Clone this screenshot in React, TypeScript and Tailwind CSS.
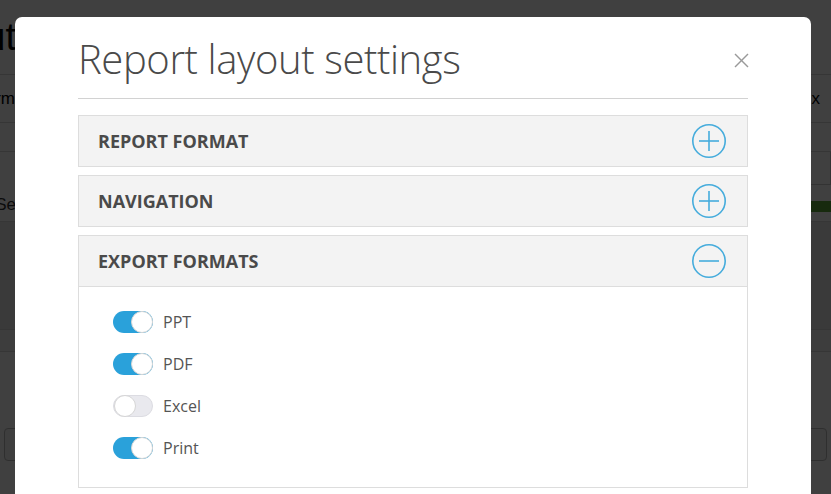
import React from "react";

function CircleIcon({ minus }: { minus?: boolean }) {
  return (
    <svg width="36" height="36" viewBox="0 0 36 36" fill="none">
      <circle cx="18" cy="18" r="16.2" stroke="#45acdc" strokeWidth="1.6" />
      <line x1="8" y1="18" x2="28" y2="18" stroke="#45acdc" strokeWidth="1.6" />
      {!minus && <line x1="18" y1="8" x2="18" y2="28" stroke="#45acdc" strokeWidth="1.6" />}
    </svg>
  );
}

function Toggle({ on }: { on: boolean }) {
  return (
    <div
      className={
        on
          ? "flex h-[22px] w-[40px] items-center justify-end rounded-full bg-[#2aa1da]"
          : "flex h-[22px] w-[40px] items-center justify-start rounded-full border border-[#dcdce2] bg-[#e9e9ee]"
      }
    >
      <div className="h-[22px] w-[22px] rounded-full border border-[#d6d6d6] bg-white" />
    </div>
  );
}

function Panel({ title }: { title: string }) {
  return (
    <div className="border border-[#dddddd]">
      <div className="flex h-[50px] items-center justify-between bg-[#f3f3f3] pl-[19px] pr-[20px]">
        <span className="text-[18px] font-bold tracking-[0px] text-[#4a4a4a]">{title}</span>
        <CircleIcon />
      </div>
    </div>
  );
}

export default function App() {
  const items = [
    { label: "PPT", on: true },
    { label: "PDF", on: true },
    { label: "Excel", on: false },
    { label: "Print", on: true },
  ];
  return (
    <div
      className="relative h-[494px] w-[831px] overflow-hidden bg-white"
      style={{ fontFamily: '"Open Sans", "Liberation Sans", sans-serif' }}
    >
      {/* background page */}
      <div className="flex flex-col" style={{ fontFamily: '"Liberation Sans", sans-serif' }}>
        <div className="flex h-[75px] items-end pb-[18px] border-b border-[#d8d8d8]">
          <div className="flex w-[16px] justify-end overflow-hidden">
            <span className="whitespace-nowrap text-[38px] leading-none text-black">Layout</span>
          </div>
        </div>
        <div className="flex h-[48px] items-center justify-between border-b border-[#d8d8d8]">
          <div className="flex w-[15px] justify-end overflow-hidden">
            <span className="whitespace-nowrap text-[17px] text-black">Form</span>
          </div>
          <span className="pr-[11px] text-[17px] text-black">x</span>
        </div>
        <div className="h-[29px] border-b border-[#d8d8d8]" />
        <div className="flex h-[70px] border-b border-[#d8d8d8]">
          <div className="flex w-[16px] items-end justify-end overflow-hidden pb-[4px]">
            <span className="whitespace-nowrap text-[17px] text-[#333]">Se</span>
          </div>
          <div className="flex-1" />
          <div className="flex w-[20px] flex-col">
            <div className="h-[33px] border-r border-b border-[#ccc]" />
            <div className="mt-[16px] h-[11px] bg-[#5ca63a]" />
          </div>
        </div>
        <div className="h-[108px] border-b border-[#d8d8d8] bg-[#e6e6e6]" />
        <div className="h-[22px] border-b border-[#d8d8d8] bg-[#f2f2f2]" />
        <div className="h-[76px]" />
        <div className="mx-[4px] flex h-[33px] justify-between">
          <div className="w-[30px] rounded border border-[#bbb] bg-[#f6f6f6]" />
          <div className="w-[30px] rounded border border-[#bbb] bg-[#f6f6f6]" />
        </div>
      </div>

      {/* overlay */}
      <div className="absolute inset-0 bg-black/75" />

      {/* modal */}
      <div className="absolute left-[15px] top-[17px] h-[520px] w-[796px] rounded-[7px] bg-white px-[63px]">
        <div className="flex items-start justify-between border-b border-[#d2d2d2] pt-[18px] pb-[15px]">
          <h1 className="text-[40px] font-light leading-[1.2] tracking-[-0.4px] text-[#4a4a4a]">
            Report layout settings
          </h1>
          <svg width="15" height="15" viewBox="0 0 15 15" className="mr-[-1px] mt-[18px]">
            <line x1="1" y1="1" x2="14" y2="14" stroke="#9a9a9a" strokeWidth="1.4" />
            <line x1="14" y1="1" x2="1" y2="14" stroke="#9a9a9a" strokeWidth="1.4" />
          </svg>
        </div>
        <div className="mt-[16px] flex flex-col gap-[8px]">
          <Panel title="REPORT FORMAT" />
          <Panel title="NAVIGATION" />
          <div className="border border-[#dddddd]">
            <div className="flex h-[51px] items-center justify-between border-b border-[#dddddd] bg-[#f3f3f3] pl-[19px] pr-[20px]">
              <span className="text-[18px] font-bold tracking-[0px] text-[#4a4a4a]">EXPORT FORMATS</span>
              <CircleIcon minus />
            </div>
            <div className="flex flex-col gap-[20px] bg-white pl-[34px] pt-[24px] pb-[28px]">
              {items.map((it) => (
                <div key={it.label} className="flex items-center gap-[10px]">
                  <Toggle on={it.on} />
                  <span className="text-[16px] leading-none text-[#555]">{it.label}</span>
                </div>
              ))}
            </div>
          </div>
        </div>
      </div>
    </div>
  );
}
